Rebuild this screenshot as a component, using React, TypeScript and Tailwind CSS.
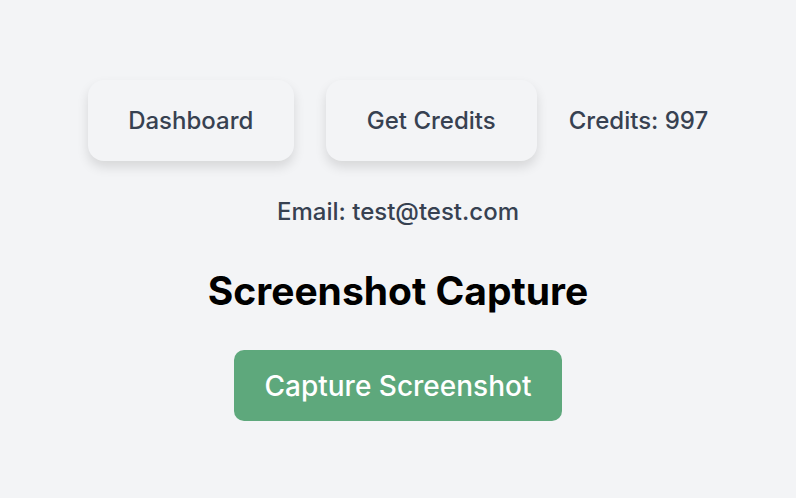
export default function App() {
  return (
    <div
      className="min-h-screen bg-[#f3f4f6] flex flex-col items-center pt-[80px]"
      style={{ fontFamily: "Inter, 'Noto Sans', sans-serif" }}
    >
      <div className="flex items-center gap-[32px]">
        <button className="h-[81px] w-[206px] rounded-[16px] bg-[#f3f4f6] text-[24px] font-medium text-[#374151] shadow-[0_6px_12px_rgba(0,0,0,0.12)]">
          Dashboard
        </button>
        <button className="h-[81px] w-[211px] rounded-[16px] bg-[#f3f4f6] text-[24px] font-medium text-[#374151] shadow-[0_6px_12px_rgba(0,0,0,0.12)]">
          Get Credits
        </button>
        <span className="text-[24px] font-medium text-[#374151] leading-[32px]">Credits: 997</span>
      </div>
      <p className="mt-[35px] text-[24px] leading-[32px] font-medium text-[#374151]">Email: test@test.com</p>
      <h1 className="mt-[39px] text-[39px] font-bold text-black leading-[48px]">Screenshot Capture</h1>
      <button className="mt-[35px] h-[71px] w-[328px] rounded-[10px] bg-[#5ea87c] text-[28px] font-medium text-white">
        Capture Screenshot
      </button>
    </div>
  )
}
